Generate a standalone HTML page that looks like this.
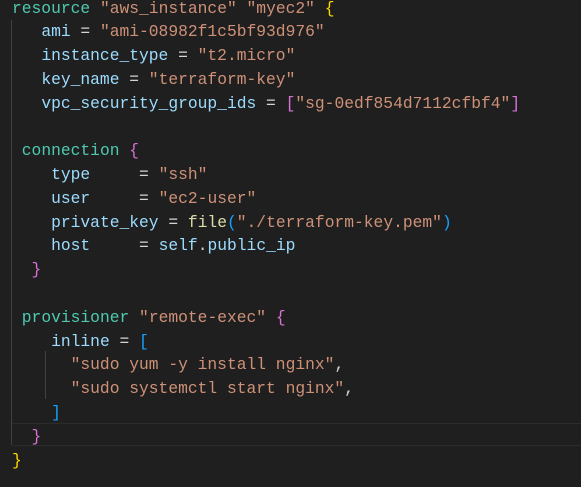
<!DOCTYPE html>
<html><head><style>
html,body{margin:0;padding:0;background:#1f1f1f;width:581px;height:487px;overflow:hidden}
pre{position:absolute;left:12px;top:-3.5px;margin:0;font-family:"Liberation Mono",monospace;font-size:16.3px;line-height:23.8px;color:#d4d4d4;white-space:pre}
.k{color:#4ec9b0}.s{color:#ce9178}.v{color:#9cdcfe}.p{color:#da70d6}.b{color:#179fff}.y{color:#ffd700}.f{color:#dcdcaa}
.g{position:absolute;background:#404040;width:1px}
.hl{position:absolute;left:12px;right:0;top:423px;height:21px;border-top:1px solid #2c2c2c;border-bottom:1px solid #2c2c2c}
</style></head><body>
<div class="hl"></div>
<div class="g" style="left:11px;top:20px;height:425px"></div>
<div class="g" style="left:45px;top:351px;height:48px"></div>
<pre><span class="k">resource</span> <span class="s">"aws_instance"</span> <span class="s">"myec2"</span> <span class="y">{</span>
   <span class="v">ami</span> = <span class="s">"ami-08982f1c5bf93d976"</span>
   <span class="v">instance_type</span> = <span class="s">"t2.micro"</span>
   <span class="v">key_name</span> = <span class="s">"terraform-key"</span>
   <span class="v">vpc_security_group_ids</span> = <span class="p">[</span><span class="s">"sg-0edf854d7112cfbf4"</span><span class="p">]</span>

 <span class="k">connection</span> <span class="p">{</span>
    <span class="v">type</span>     = <span class="s">"ssh"</span>
    <span class="v">user</span>     = <span class="s">"ec2-user"</span>
    <span class="v">private_key</span> = <span class="f">file</span><span class="b">(</span><span class="s">"./terraform-key.pem"</span><span class="b">)</span>
    <span class="v">host</span>     = <span class="v">self</span>.<span class="v">public_ip</span>
  <span class="p">}</span>

 <span class="k">provisioner</span> <span class="s">"remote-exec"</span> <span class="p">{</span>
    <span class="v">inline</span> = <span class="b">[</span>
      <span class="s">"sudo yum -y install nginx"</span>,
      <span class="s">"sudo systemctl start nginx"</span>,
    <span class="b">]</span>
  <span class="p">}</span>
<span class="y">}</span></pre>
</body></html>
